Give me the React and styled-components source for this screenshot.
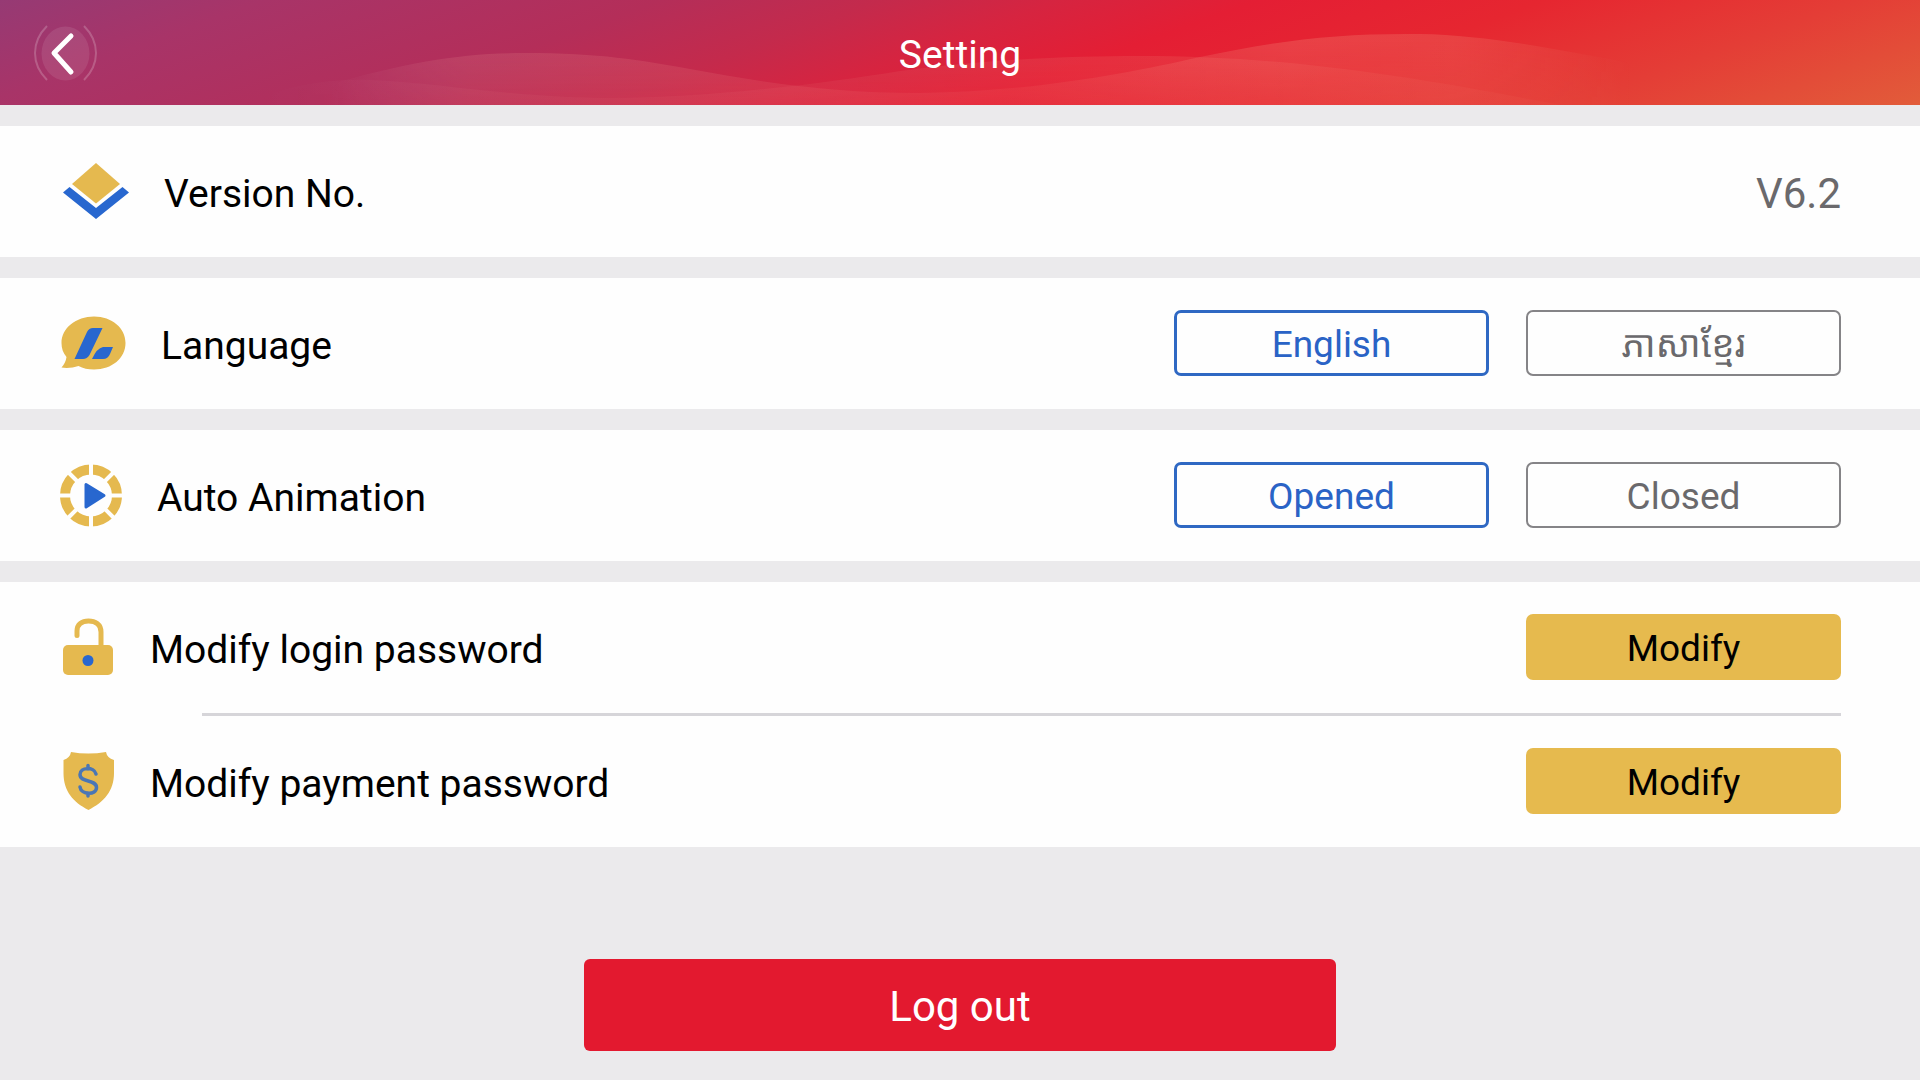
import React, { useState } from "react";
import styled, { createGlobalStyle } from "styled-components";

const GlobalStyle = createGlobalStyle`
  *, *::before, *::after { box-sizing: border-box; }
  body {
    margin: 0;
    background: #ebeaec;
    color: #000;
    font-family: Roboto, "Noto Sans Khmer", "Khmer OS", "Noto Sans", sans-serif;
  }
  button { font-family: inherit; cursor: pointer; }
`;

const Page = styled.div`
  display: flex;
  flex-direction: column;
  min-height: 100vh;
`;

const Header = styled.header`
  position: relative;
  display: grid;
  grid-template-columns: 1fr auto 1fr;
  align-items: center;
  height: 105px;
  padding: 0 34px;
  overflow: hidden;
  background: linear-gradient(160deg, #963a74 0%, #a83468 12%, #b42e59 30%, #c42a4c 40%, #d62440 48%, #e41e34 57%, #e62630 70%, #e43d36 84%, #e25c3a 100%);
`;

const Waves = styled.svg`
  position: absolute;
  inset: 0;
  width: 100%;
  height: 100%;
`;

const BackButton = styled.button`
  position: relative;
  justify-self: start;
  display: flex;
  padding: 0;
  border: 0;
  background: none;
`;

const Title = styled.h1`
  position: relative;
  margin: 0;
  padding-top: 4px;
  color: #fff;
  font-size: 39px;
  font-weight: 400;
  line-height: 48px;
`;

const Main = styled.main`
  display: flex;
  flex-direction: column;
  gap: 21px;
  padding-top: 21px;
`;

const Group = styled.section`
  background: #fefefe;
`;

const Row = styled.div`
  display: flex;
  align-items: center;
  gap: 35px;
  height: 131px;
  padding: 0 79px 2px 60px;
`;

const Divider = styled.hr`
  height: 3px;
  margin: 0 79px 0 202px;
  border: 0;
  background: #d6d5d9;
`;

const Icon = styled.svg`
  flex: none;
  height: 66px;
`;

const Label = styled.span`
  flex: 1;
  padding-top: 6px;
  font-size: 39px;
  line-height: 48px;
`;

const Version = styled.span`
  color: #6a696c;
  font-size: 42px;
  line-height: 48px;
  padding-top: 6px;
`;

const Options = styled.div`
  display: flex;
  gap: 37px;
`;

const Button = styled.button`
  width: 315px;
  height: 66px;
  padding: 4px 0 0;
  border-radius: 7px;
  font-size: 37px;
  line-height: 48px;
`;

const OptionButton = styled(Button)`
  border: ${(p) => (p.$active ? "3px solid #2f68c3" : "2px solid #858487")};
  background: #fefefe;
  color: ${(p) => (p.$active ? "#2a63c6" : "#6a696c")};
`;

const ModifyButton = styled(Button)`
  border: 0;
  background: #e6ba4e;
  color: #000;
`;

const LogoutButton = styled.button`
  align-self: center;
  width: 752px;
  height: 92px;
  margin-top: 91px;
  padding: 4px 0 0;
  border: 0;
  border-radius: 6px;
  background: #e3192f;
  color: #fff;
  font-size: 42px;
  line-height: 48px;
`;

const GOLD = "#e5b94f";
const BLUE = "#2867cf";

function VersionIcon() {
  return (
    <Icon width="69" viewBox="0 0 69 66" aria-hidden="true">
      <path fill={GOLD} d="M36 5 60 26 36 45.500 12 26Z" />
      <path fill={BLUE} d="M3 34.500 9.500 29 36 50 62.500 29 69 34.500 36 61Z" />
    </Icon>
  );
}

function LanguageIcon() {
  return (
    <Icon width="66" viewBox="0 0 66 66" aria-hidden="true">
      <path fill={GOLD} d="M34 6.500C52 6.500 65.500 18 65.500 33S52 59.500 34 59.500c-6 0-11-1-15.500-3.500C13 58 6 58.500 1.500 57.500 4 54.500 6 51 6.500 47 3 43 1.500 38 1.500 33 1.500 18 16 6.500 34 6.500Z" />
      <path fill={BLUE} d="M33 18H42.500L29.500 45Q27 49 23 49H14.500L27 22Q29 18 33 18ZM43 37H53L50 44Q48 49 43 49H32Q37 38 43 37Z" />
    </Icon>
  );
}

function AnimationIcon() {
  return (
    <Icon width="62" viewBox="0 0 62 66" aria-hidden="true">
      <circle cx="31" cy="33.500" r="26" fill="none" stroke={GOLD} strokeWidth="10" />
      <path stroke="#fefefe" strokeWidth="4" d="M31 0V20M31 47V66M-1 33.500H18M44 33.500H63M8 10 21 23M41 43 54 56M54 10 41 23M21 43 8 56" />
      <path fill={BLUE} stroke={BLUE} strokeWidth="3" strokeLinejoin="round" d="M26 22.500V45L44 33.500Z" />
    </Icon>
  );
}

function LockIcon() {
  return (
    <Icon width="55" viewBox="0 0 55 66" aria-hidden="true">
      <path fill="none" stroke={GOLD} strokeWidth="5" strokeLinecap="round" d="M17 21.500V17C17 10 22 7 28.500 7S41 10 41 18V32" />
      <rect x="3" y="31" width="50" height="30" rx="5" fill={GOLD} />
      <circle cx="28" cy="46.500" r="5.500" fill={BLUE} />
    </Icon>
  );
}

function ShieldIcon() {
  return (
    <Icon width="55" viewBox="0 0 55 66" aria-hidden="true">
      <path fill={GOLD} d="M11 4Q28 7 46 4 47 10 54 12V25C54 43 44 54 28.500 62 13 54 3.500 43 3.500 25V12Q10 10 11 4Z" />
      <path fill="none" stroke="#4a76b5" strokeWidth="3.500" strokeLinecap="round" strokeLinejoin="round" d="M28 17.500V21M28 45V48M36 26C34 18.500 20 19 20 26.500 20 35 36.500 31 36.500 39.500 36.500 47.500 21 47 20 39" />
    </Icon>
  );
}

function SettingRow({ icon, label, children }) {
  return (
    <Row>
      {icon}
      <Label>{label}</Label>
      {children}
    </Row>
  );
}

function Choice({ label, options, value, onChange }) {
  return (
    <Options role="group" aria-label={label}>
      {options.map((option) => (
        <OptionButton
          key={option}
          type="button"
          $active={option === value}
          aria-pressed={option === value}
          onClick={() => onChange(option)}
        >
          {option}
        </OptionButton>
      ))}
    </Options>
  );
}

export default function App() {
  const [language, setLanguage] = useState("English");
  const [animation, setAnimation] = useState("Opened");

  return (
    <Page>
      <GlobalStyle />
      <Header>
        <Waves viewBox="0 0 1920 105" preserveAspectRatio="none" aria-hidden="true">
          <defs>
            <linearGradient id="crest" gradientUnits="userSpaceOnUse" x1="330" y1="0" x2="1700" y2="0">
              <stop offset="0" stopColor="#fff" stopOpacity="0" />
              <stop offset="0.100" stopColor="#ffb0a0" stopOpacity="0.160" />
              <stop offset="0.300" stopColor="#ffb0a0" stopOpacity="0.160" />
              <stop offset="0.500" stopColor="#ffc8a8" stopOpacity="0.100" />
              <stop offset="0.700" stopColor="#ffd8b0" stopOpacity="0.170" />
              <stop offset="0.820" stopColor="#ffd8b0" stopOpacity="0.150" />
              <stop offset="0.950" stopColor="#ffd8b0" stopOpacity="0" />
            </linearGradient>
            <linearGradient id="swell" gradientUnits="userSpaceOnUse" x1="240" y1="0" x2="1560" y2="0">
              <stop offset="0" stopColor="#fff" stopOpacity="0" />
              <stop offset="0.200" stopColor="#ffc0b0" stopOpacity="0.080" />
              <stop offset="0.700" stopColor="#ffd8b0" stopOpacity="0.110" />
              <stop offset="1" stopColor="#ffd8b0" stopOpacity="0.050" />
            </linearGradient>
            <linearGradient id="depth" gradientUnits="userSpaceOnUse" x1="0" y1="40" x2="0" y2="105">
              <stop offset="0" stopColor="#fff" />
              <stop offset="1" stopColor="#fff" stopOpacity="0.500" />
            </linearGradient>
            <mask id="fade" maskUnits="userSpaceOnUse" x="0" y="0" width="1920" height="105">
              <rect width="1920" height="105" fill="url(#depth)" />
            </mask>
          </defs>
          <g mask="url(#fade)">
            <path fill="url(#crest)" d="M330 84C410 62 460 53 525 53 600 53 640 60 690 69 760 82 830 93 920 93 1030 92 1130 73 1200 57 1280 40 1340 33 1420 34 1480 35 1540 46 1620 61L1700 76V105H330Z" />
            <path fill="url(#swell)" d="M240 105C280 88 320 78 370 80 450 84 500 96 600 98 700 99 820 84 900 71 990 59 1070 56 1140 56 1280 56 1400 74 1560 105Z" />
          </g>
        </Waves>
        <BackButton type="button" aria-label="Back">
          <svg width="64" height="70" viewBox="0 0 64 70" aria-hidden="true">
            <ellipse cx="31.500" cy="35.500" rx="24" ry="27" fill="#fff" fillOpacity="0.090" />
            <path fill="none" stroke="#fff" strokeOpacity="0.200" strokeWidth="2" d="M13 8C-3 24-3 46 13 62M50 8C66 24 66 46 50 62" />
            <path fill="none" stroke="#fff" strokeWidth="5" strokeLinecap="round" strokeLinejoin="round" d="M37 18 20 35 37 54" />
          </svg>
        </BackButton>
        <Title>Setting</Title>
      </Header>

      <Main>
        <Group>
          <SettingRow icon={<VersionIcon />} label="Version No.">
            <Version>V6.2</Version>
          </SettingRow>
        </Group>
        <Group>
          <SettingRow icon={<LanguageIcon />} label="Language">
            <Choice label="Language" options={["English", "ភាសាខ្មែរ"]} value={language} onChange={setLanguage} />
          </SettingRow>
        </Group>
        <Group>
          <SettingRow icon={<AnimationIcon />} label="Auto Animation">
            <Choice label="Auto Animation" options={["Opened", "Closed"]} value={animation} onChange={setAnimation} />
          </SettingRow>
        </Group>
        <Group>
          <SettingRow icon={<LockIcon />} label="Modify login password">
            <ModifyButton type="button">Modify</ModifyButton>
          </SettingRow>
          <Divider />
          <SettingRow icon={<ShieldIcon />} label="Modify payment password">
            <ModifyButton type="button">Modify</ModifyButton>
          </SettingRow>
        </Group>
        <LogoutButton type="button">Log out</LogoutButton>
      </Main>
    </Page>
  );
}
